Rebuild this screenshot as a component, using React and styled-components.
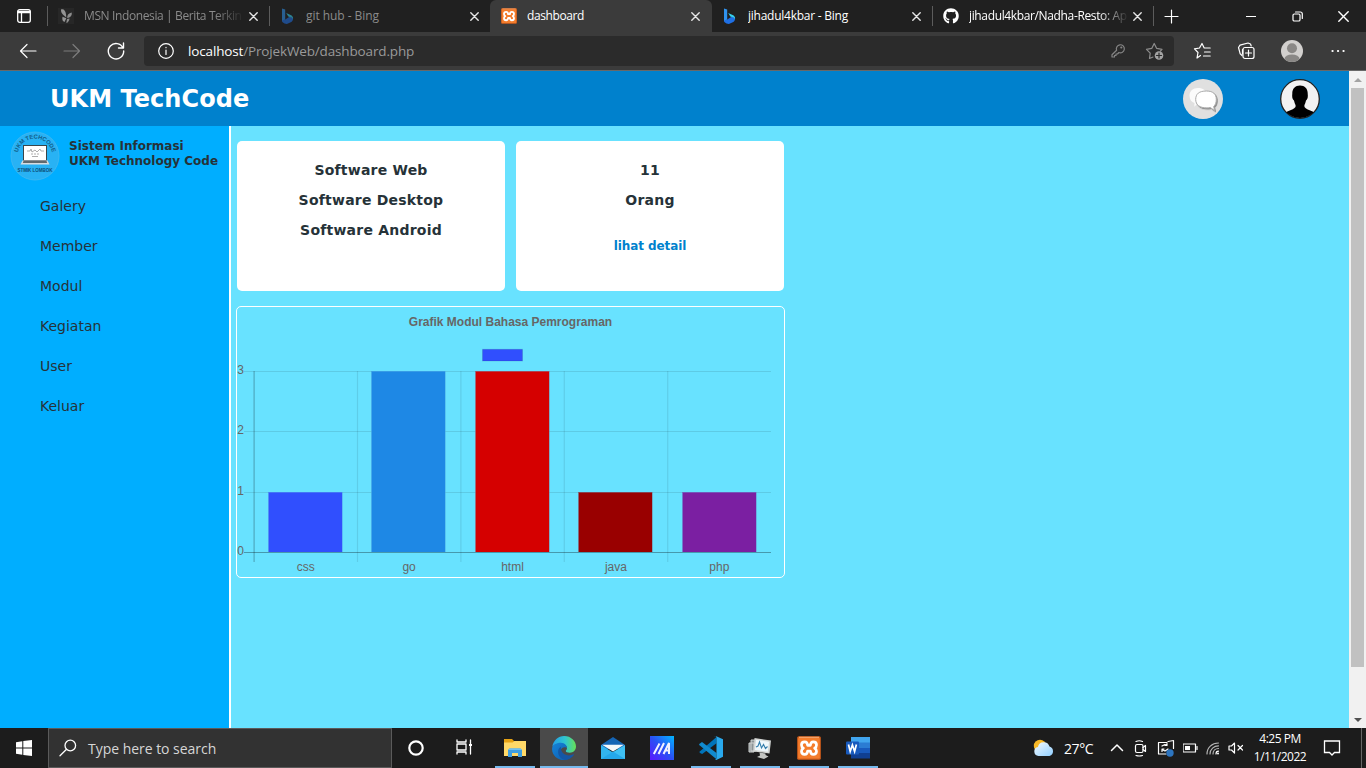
import React from "react";
import styled, { createGlobalStyle } from "styled-components";
import { FaGithub } from "react-icons/fa";

const GlobalStyle = createGlobalStyle`
  *, *::before, *::after { box-sizing: border-box; }
  html, body { margin: 0; padding: 0; overflow: hidden; background: #202020; }
  svg { display: block; flex: none; }
`;

const ui = `"Open Sans", "Noto Sans", sans-serif`;
const verdana = `"DejaVu Sans", Verdana, sans-serif`;

const Screen = styled.div`
  width: 1366px;
  height: 768px;
  display: flex;
  flex-direction: column;
  overflow: hidden;
  font-family: ${ui};
`;

/* ---------- browser chrome ---------- */
const TabStrip = styled.div`
  height: 32px;
  flex: none;
  display: flex;
  background: #202020;
  color: #fff;
`;
const TabActions = styled.div`
  width: 47px;
  padding-left: 17px;
  display: flex;
  align-items: center;
`;
const Separator = styled.div`
  width: 1px;
  height: 20px;
  margin-top: 6px;
  background: #5c5c5c;
`;
const Tab = styled.div`
  width: ${(p) => p.$width}px;
  padding: 0 ${(p) => p.$end ?? 11}px 0 ${(p) => p.$pad ?? 10}px;
  display: flex;
  align-items: center;
  background: ${(p) => (p.$active ? "#3b3b3b" : "transparent")};
  border-radius: 6px 6px 0 0;
`;
const Favicon = styled.div`
  width: 16px;
  height: 16px;
  flex: none;
  opacity: ${(p) => (p.$dim ? 0.55 : 1)};
`;
const TabTitle = styled.div`
  flex: 1;
  min-width: 0;
  margin-left: 10px;
  margin-right: 6px;
  overflow: hidden;
  white-space: nowrap;
  font-size: 12px;
  line-height: 16px;
  letter-spacing: ${(p) => p.$spacing ?? 0}px;
  color: ${(p) => (p.$dim ? "#8b8b8b" : "#fff")};
  ${(p) => p.$fade && "mask-image: linear-gradient(90deg, #000 82%, transparent 101%);"}
`;
const NewTab = styled.div`
  width: 34px;
  padding-left: 9px;
  display: flex;
  align-items: center;
`;
const WindowButtons = styled.div`
  margin-left: auto;
  width: 138px;
  display: flex;
  align-items: center;
`;
const WindowButton = styled.div`
  width: 46px;
  display: flex;
  justify-content: center;
`;
const Toolbar = styled.div`
  height: 39px;
  flex: none;
  display: flex;
  align-items: center;
  background: #3b3b3b;
  border-bottom: 1px solid #686868;
  padding-left: 18px;
  color: #fff;
`;
const NavIcons = styled.div`
  width: 126px;
  display: flex;
  gap: 24px;
`;
const AddressBar = styled.div`
  width: 1030px;
  height: 30px;
  border-radius: 4px;
  background: #2b2b2b;
  display: flex;
  align-items: center;
  padding: 0 9px 0 14px;
`;
const Url = styled.div`
  flex: 1;
  margin-left: 14px;
  font-size: 13.5px;
  line-height: 20px;
  letter-spacing: -0.15px;
  color: #9a9a9a;
  span { color: #fff; }
`;
const AddressIcons = styled.div`
  display: flex;
  gap: 18px;
`;
const ToolIcons = styled.div`
  margin-left: 19px;
  display: flex;
  align-items: center;
  gap: 24px;
`;

/* ---------- web page ---------- */
const Viewport = styled.div`
  height: 657px;
  flex: none;
  display: flex;
`;
const Page = styled.div`
  width: 1349px;
  display: flex;
  flex-direction: column;
  background: #68e2ff;
  font-family: ${verdana};
  color: #263238;
`;
const Header = styled.header`
  height: 55px;
  flex: none;
  display: flex;
  align-items: center;
  background: #0081cd;
  padding: 0 29px 0 50px;
`;
const Brand = styled.h1`
  margin: 0 auto 0 0;
  font-size: 24px;
  line-height: 28px;
  font-weight: 700;
  letter-spacing: 0.05px;
  color: #fff;
`;
const HeaderIcons = styled.div`
  display: flex;
  gap: 57px;
`;
const Body = styled.div`
  flex: 1;
  display: flex;
`;
const Sidebar = styled.aside`
  width: 231px;
  background: #00aeff;
  border-right: 2px solid #fff;
`;
const Identity = styled.div`
  display: flex;
  padding: 5px 0 0 10px;
`;
const IdentityText = styled.div`
  margin: 8px 0 0 9px;
  font-size: 12px;
  line-height: 15px;
  font-weight: 700;
  white-space: nowrap;
`;
const Menu = styled.nav`
  display: flex;
  flex-direction: column;
  padding: 5px 0 0 40px;
`;
const MenuItem = styled.a`
  height: 40px;
  font-size: 14px;
  line-height: 40px;
`;
const Content = styled.main`
  padding: 15px 0 0 5px;
`;
const CardRow = styled.div`
  display: flex;
  gap: 11px;
  padding-left: 1px;
`;
const Card = styled.section`
  width: 268px;
  height: 150px;
  padding-top: 14px;
  border-radius: 5px;
  background: #fff;
  text-align: center;
`;
const CardLine = styled.div`
  height: 30px;
  font-size: 14px;
  line-height: 30px;
  font-weight: 700;
  letter-spacing: 0.22px;
`;
const CardLink = styled.a`
  display: block;
  margin-top: 16px;
  font-size: 12px;
  line-height: 30px;
  font-weight: 700;
  letter-spacing: -0.1px;
  color: #0081cd;
`;
const ChartPanel = styled.section`
  width: 549px;
  height: 272px;
  margin-top: 15px;
  border: 1px solid #fff;
  border-radius: 5px;
`;
const Scrollbar = styled.div`
  width: 17px;
  background: #f1f1f1;
  display: flex;
  flex-direction: column;
  align-items: center;
`;
const ScrollArrow = styled.div`
  height: 17px;
  display: flex;
  align-items: center;
`;
const ScrollThumb = styled.div`
  width: 13px;
  height: 579px;
  margin-bottom: auto;
  background: #c1c1c1;
`;

/* ---------- taskbar ---------- */
const Taskbar = styled.div`
  height: 40px;
  flex: none;
  display: flex;
  background: #1c1c1c;
  color: #fff;
`;
const StartButton = styled.div`
  width: 48px;
  display: flex;
  align-items: center;
  justify-content: center;
`;
const SearchBox = styled.div`
  width: 344px;
  border: 1px solid #5a5a5a;
  background: #323232;
  display: flex;
  align-items: center;
  padding-left: 10px;
  gap: 11px;
  font-size: 14px;
  letter-spacing: -0.03px;
  color: #d6d6d6;
`;
const TaskButton = styled.div`
  width: ${(p) => p.$width ?? 48}px;
  height: 40px;
  margin-right: ${(p) => p.$after ?? 0}px;
  display: flex;
  align-items: center;
  justify-content: center;
  padding-top: ${(p) => p.$drop ?? 2}px;
  background: ${(p) => (p.$active ? "#4a4a4a" : "transparent")};
  border-bottom: 2px solid ${(p) => (p.$open ? "#76b9ed" : "transparent")};
`;
const Tray = styled.div`
  margin-left: auto;
  width: 333px;
  display: flex;
  align-items: center;
`;
const Temperature = styled.div`
  width: 46px;
  margin-left: 9px;
  font-size: 14px;
  letter-spacing: -0.4px;
  white-space: nowrap;
`;
const TrayIcons = styled.div`
  display: flex;
  align-items: center;
  gap: 8px;
`;
const Clock = styled.div`
  width: 66px;
  margin-left: 3px;
  text-align: center;
  font-size: 12px;
  line-height: 18px;
  letter-spacing: -0.5px;
  white-space: nowrap;
`;
const Notifications = styled.div`
  margin-left: 10px;
`;
const ShowDesktop = styled.div`
  width: 5px;
  height: 40px;
  margin-left: auto;
  border-left: 1px solid #666;
`;

const Line = ({ w = 16, h = w, vb, sw = 1.2, color = "#fff", children }) => (
  <svg width={w} height={h} viewBox={vb || `0 0 ${w} ${h}`} fill="none" stroke={color} strokeWidth={sw} strokeLinecap="round" strokeLinejoin="round">
    {children}
  </svg>
);

const CloseIcon = ({ size = 9, color = "#e6e6e6" }) => (
  <Line w={size} color={color} sw={1.4}>
    <path d={`M.8 .8 L${size - 0.8} ${size - 0.8} M${size - 0.8} .8 L.8 ${size - 0.8}`} />
  </Line>
);

const BingIcon = () => (
  <svg width="16" height="16" viewBox="0 0 16 16">
    <path d="M2 .5 5.200 1.600v9.800L2 13.600z" fill="#2f93ee" />
    <path d="M2 12.400 5.200 11.400 10 8.600l3 1.200c.3 2-.4 3.300-1.700 4.100L6.900 16 4.500 15.600 2.300 14z" fill="#1f6fe4" />
    <path d="M6.200 5 11.200 7.200c1.400.8 2.200 2.200 1.800 4.200-.3-1.200-1-1.700-2.200-2.100L8.300 8.600z" fill="#36d1ee" />
  </svg>
);

const MsnIcon = () => (
  <svg width="16" height="16" viewBox="0 0 16 16">
    <rect width="16" height="16" fill="#2e2e2e" />
    <path d="M3 1.500c2.600-1 4.600 1.100 5 4.900l.3 3.200L5.400 7C3.700 5.600 2.800 3.600 3 1.500zM4.500 8.700l3.800 1.500L6.500 14c-1.900-.6-2.600-2.500-2-5.300z" fill="#f3f3f3" />
    <path d="M13.700 4.500c.6 2.400-.8 4.600-3.100 5.300L9.200 10c-.2-3 1.600-5 4.500-5.500zM9 11l2.500-.6c-.1 2.200-1.300 3.900-3.200 4.600z" fill="#e5e5e5" />
  </svg>
);

const XamppIcon = ({ size }) => (
  <svg width={size} height={size} viewBox="0 0 24 24">
    <rect x=".2" y=".2" width="23.600" height="23.600" rx="1.600" fill="#d9601b" />
    <rect x="1.200" y="2" width="21.600" height="20.500" rx="1" fill="#f47d2c" />
    <path d="M2 1.300h20" stroke="#f9b27d" strokeWidth="1" />
    <path
      d="M6.400 12.200C5 11.500 4.500 10.300 4.500 9 4.500 7 6 5.900 7.700 5.900c2.200 0 2.800 1.300 2.900 3.400h2.800c.1-2.100.7-3.400 2.900-3.400 1.700 0 3.200 1.100 3.200 3.100 0 1.300-.5 2.500-1.900 3.200 1.400.7 1.900 1.800 1.900 3.100 0 2-1.500 3.100-3.200 3.100-2.200 0-2.800-1.300-2.900-3.400h-2.800c-.1 2.100-.7 3.400-2.900 3.400-1.700 0-3.200-1.100-3.200-3.100 0-1.300.5-2.400 1.900-3.100z"
      fill="none" stroke="#fff" strokeWidth="2.700" strokeLinejoin="round"
    />
  </svg>
);

const PersonIcon = () => (
  <svg width="22" height="22" viewBox="0 0 22 22">
    <clipPath id="person"><circle cx="11" cy="11" r="11" /></clipPath>
    <g clipPath="url(#person)">
      <rect width="22" height="22" fill="#d2d0ce" />
      <circle cx="11" cy="8.200" r="5" fill="#8a8886" />
      <ellipse cx="11" cy="19.400" rx="7.600" ry="5" fill="#8a8886" />
    </g>
  </svg>
);

const LogoIcon = () => (
  <svg width="50" height="50" viewBox="0 0 50 50">
    <circle cx="25" cy="25" r="24" fill="#28b2f4" stroke="#4bb9ed" strokeWidth=".7" />
    <path id="ring" d="M8.100 20.500A17.500 17.500 0 0 1 41.900 20.500" fill="none" />
    <text fontFamily="Liberation Sans, sans-serif" fontSize="5.800" fontWeight="700" fill="#11608c">
      <textPath href="#ring" startOffset="50%" textAnchor="middle">UKM TECHCODE</textPath>
    </text>
    <rect x="13" y="14" width="24" height="16" fill="#3a4549" />
    <rect x="14" y="15" width="22" height="14" fill="#fff" />
    <path d="M17 20h3l1-2 1 3 3-2 2 2 3-3 1 2h3M21 23h2m1 0h2m1 0h2M22 25.500h6" fill="none" stroke="#999" strokeWidth=".8" />
    <path d="M12.500 29.500h25l2 4h-29z" fill="#d7dcdf" />
    <path d="M13.500 30.300h23l.7 1.500H12.800z" fill="#384347" />
    <text x="25" y="40.500" textAnchor="middle" fontFamily="Liberation Sans, sans-serif" fontSize="4.500" fontWeight="700" fill="#0c4f78">STMIK LOMBOK</text>
  </svg>
);

const ChatIcon = () => (
  <svg width="40" height="40" viewBox="0 0 40 40">
    <defs><filter id="soft" x="-20%" y="-20%" width="150%" height="150%"><feDropShadow dx="1" dy="1.200" stdDeviation=".7" floodColor="#777" floodOpacity=".8" /></filter></defs>
    <circle cx="20" cy="20" r="20" fill="#e0e0e0" />
    <path d="M15 9c5 0 8.500 2.500 8.500 6.500S20 24.500 14.500 24.500l-3.200 3.200.2-3.600C8.500 23 6.500 20.500 6.500 16.500 6.500 12 10 9 15 9z" fill="#fbfbfb" />
    <path d="M23.500 12c6.500 0 9.800 3 9.800 8.500 0 3.300-1 5.500-2.600 7l.8 4-4.200-3c-1 .3-2 .4-3.300.4-7.500 0-11.300-3-11.300-8.500S16 12 23.500 12z" fill="#fff" stroke="#aaa" strokeWidth="1" filter="url(#soft)" />
  </svg>
);

const UserIcon = () => (
  <svg width="40" height="40" viewBox="0 0 40 40">
    <clipPath id="user"><circle cx="20" cy="20" r="19" /></clipPath>
    <circle cx="20" cy="20" r="19.300" fill="#f2f2f2" stroke="#222" strokeWidth="1.300" />
    <g clipPath="url(#user)">
      <path d="M20 6.500c5 0 8 3.500 7.700 8.500.5 3-.4 5.700-1.700 6.500-.5 2.500-1.500 4-1.700 5.500.2 4 8.700 4 11 7.500V40H4.700v-5.500c2.300-3.500 10.800-3.500 11-7.500-.2-1.500-1.200-3-1.700-5.500-1.300-.8-2.200-3.500-1.700-6.500-.3-5 2.700-8.500 7.700-8.500z" fill="#000" />
    </g>
  </svg>
);

const bars = [
  { label: "css", value: 1, color: "#304ffe" },
  { label: "go", value: 3, color: "#1e88e5" },
  { label: "html", value: 3, color: "#d50000" },
  { label: "java", value: 1, color: "#990000" },
  { label: "php", value: 1, color: "#7b1fa2" },
];
const levels = [245, 185, 124, 64];
const step = 103.4;

const ModuleChart = () => (
  <svg width="547" height="270" viewBox="0 0 547 270" fontFamily="Liberation Sans, Arial, sans-serif" fontSize="12" fill="#666">
    <text x="273.500" y="19" textAnchor="middle" fontWeight="700">Grafik Modul Bahasa Pemrograman</text>
    <rect x="245.500" y="42.300" width="40" height="11.700" fill="#304ffe" stroke="#000" strokeOpacity=".1" />
    {levels.map((y, i) => (
      <React.Fragment key={y}>
        <rect x="7" y={y} width="527" height="1" fill="#000" fillOpacity={i ? 0.1 : 0.32} />
        <text x="7" y={y + 3} textAnchor="end">{i}</text>
      </React.Fragment>
    ))}
    {bars.map((b, i) => (
      <React.Fragment key={b.label}>
        <rect x={i ? 16.500 + i * step : 16.500} y="64" width="1.200" height="191" fill="#000" fillOpacity={i ? 0.09 : 0.25} />
        <rect x={Math.round(31 + i * step) + 0.3} y={levels[b.value]} width="74" height={245 - levels[b.value]} fill={b.color} />
        <path d={`M${Math.round(31 + i * step) + 0.500} 245V${levels[b.value] + 0.500}h74V245`} fill="none" stroke="#68c2e8" strokeOpacity=".35" />
        <text x={68.700 + i * step} y="264" textAnchor="middle">{b.label}</text>
      </React.Fragment>
    ))}
  </svg>
);

const EdgeIcon = () => (
  <svg width="24" height="24" viewBox="0 0 24 24">
    <defs>
      <linearGradient id="edgeTop" x1="0" x2="1"><stop stopColor="#239ce8" /><stop offset=".55" stopColor="#30c6cf" /><stop offset="1" stopColor="#67df55" /></linearGradient>
      <linearGradient id="edgeSide" x1="0" y1="0" x2="1" y2="1"><stop stopColor="#1683d8" /><stop offset="1" stopColor="#0b5cae" /></linearGradient>
    </defs>
    <path d="M.3 10.800C1.200 4.700 6.200 0 12.200 0 19 0 24 5 24 10.600c0 3.600-2.600 6.200-6.200 6.200-2.500 0-4-.8-4-1.700 0-.6 1.200-1.100 1.200-3 0-2.300-2.300-4.600-6-4.600C4.900 7.500 1.800 8.700.3 10.800z" fill="url(#edgeTop)" />
    <path d="M.1 12.500C.4 9 4.300 6.600 8.900 6.700c4 .1 6.200 2.800 6 5.600-1-1.700-5.900-1.500-6.200 2.500-.3 4.300 4.600 8.500 10.500 6.500C17.200 23 14.800 24 12 24 5.300 24-.3 18.700.1 12.500z" fill="url(#edgeSide)" />
    <path d="M9.200 10.500c-1.800.9-3.100 3-3.100 5.200 0 4.100 3.100 7.600 7 8.200 3.900-.3 7.100-2.300 8.900-5.200.2-.4-.2-.6-.5-.4-3.100 1.600-6.600 1.300-8.900 0-2.800-1.700-4.300-4.900-3.400-7.800z" fill="#1557a5" />
  </svg>
);

const FolderIcon = () => (
  <svg width="22" height="20" viewBox="0 0 22 20">
    <path d="M0 1h8l2 2h12v15H0z" fill="#e6a214" />
    <path d="M0 4.500h8.500L10.500 3H22v15H0z" fill="#ffd968" />
    <path d="M4 19v-7l1.500-1.500h11L18 12v7h-4v-4H8v4z" fill="#3e9ee0" />
    <path d="M5.500 10.500h11L18 12H4z" fill="#73c2f1" />
  </svg>
);

const MailIcon = () => (
  <svg width="24" height="24" viewBox="0 0 24 24">
    <path d="M0 9 12 1l12 8v4H0z" fill="#1565b5" />
    <path d="M0 9l12 7.500V23H0z" fill="#32b5ef" />
    <path d="M24 9v14H0z" fill="#3fc0f3" />
    <path d="M1 8.700h22L12 15.500z" fill="#f5f8fa" />
    <path d="M0 23l12-7.500L24 23z" fill="#25a7ea" />
  </svg>
);

const ArmouryIcon = () => (
  <svg width="24" height="24" viewBox="0 0 24 24">
    <linearGradient id="asus" x1="0" y1="1" x2="1" y2="0"><stop stopColor="#5c16ff" /><stop offset=".5" stopColor="#2a50f5" /><stop offset="1" stopColor="#02b7ff" /></linearGradient>
    <rect width="24" height="24" fill="url(#asus)" />
    <path d="M3.800 18 9.500 7.500M8.500 18 14 7M13.500 18l5.500-11v11M16 14.500h3" fill="none" stroke="#f1f2ff" strokeWidth="2" />
  </svg>
);

const CodeIcon = () => (
  <svg width="24" height="24" viewBox="0 0 24 24">
    <path d="M17.500 1v6.200L3.200 18.100 1.500 17.300.2 15.900z" fill="#0074ba" />
    <path d="M.2 8 3 6l14.500 11v6.200L.2 8.900z" fill="#118ace" />
    <path d="M17.300.2 24 3.200v17.600L17.300 24c-.9-.2-1.400-.5-1.800-.9.9.5 2 .1 2-1V1.900c0-1.200-1.100-1.600-2-1z" fill="#29a9ed" />
  </svg>
);

const MonitorIcon = () => (
  <svg width="24" height="24" viewBox="0 0 24 24">
    <path d="M1 7h5v9H1zM3 4h5v11H3z" fill="#8d9496" stroke="#d0d3d2" />
    <path d="m6.500 2 16.500 2.500-1.500 13L5.500 15.500z" fill="#d4d7d5" />
    <path d="m8 3.800 13 2-1.200 9.900L7 13.900z" fill="#eff8fc" />
    <path d="m8 11 2-1L11.500 6l2 6 2-3.500 2 4 2-2" fill="none" stroke="#347eac" strokeWidth="1.100" />
    <path d="m11.500 16.500 6 1v1.500l3 1.500-4.500 2.500-7-2 3-1.500z" fill="#c4c6c3" />
  </svg>
);

const WordIcon = () => (
  <svg width="24" height="22" viewBox="0 0 24 22">
    <path d="M5 0h19v6H5z" fill="#41a5ee" />
    <path d="M5 5.500h19V11H5z" fill="#2b7cd3" />
    <path d="M5 11h19v5.500H5z" fill="#185abd" />
    <path d="M5 16h19v5.500H5z" fill="#103f91" />
    <rect y="4.500" width="13" height="13" rx="1" fill="#185abd" />
    <path d="m2.500 7.500 1.700 7 2.200-6.500 2.200 6.500 1.800-7" fill="none" stroke="#fff" strokeWidth="1.700" />
  </svg>
);

const WeatherIcon = () => (
  <svg width="22" height="18" viewBox="0 0 22 18">
    <defs><linearGradient id="cloud" x1="0" y1="0" x2="1" y2="1"><stop stopColor="#f4faff" /><stop offset="1" stopColor="#91cfff" /></linearGradient></defs>
    <circle cx="7" cy="7" r="6.200" fill="#f8b928" />
    <path d="M5.500 17a4.500 4.500 0 0 1-.6-8.900 6 6 0 0 1 11.600-.5A4.900 4.900 0 0 1 16.500 17z" fill="url(#cloud)" />
  </svg>
);

export default function App() {
  return (
    <Screen>
      <GlobalStyle />
      <TabStrip>
        <TabActions>
          <Line w={14} sw={1.3}>
            <rect x=".7" y=".7" width="12.600" height="12.600" rx="2" />
            <path d="M1 2.500h12M1 3.500h12M4.500 4v9" />
          </Line>
        </TabActions>
        <Separator />
        <Tab $width={221}>
          <Favicon $dim><MsnIcon /></Favicon>
          <TabTitle $dim $fade $spacing={-0.38}>MSN Indonesia | Berita Terkin</TabTitle>
          <CloseIcon />
        </Tab>
        <Separator />
        <Tab $width={220}>
          <Favicon $dim><BingIcon /></Favicon>
          <TabTitle $dim $spacing={-0.05}>git hub - Bing</TabTitle>
          <CloseIcon />
        </Tab>
        <Tab $width={222} $active $pad={11} $end={12}>
          <Favicon><XamppIcon size={16} /></Favicon>
          <TabTitle $spacing={-0.4}>dashboard</TabTitle>
          <CloseIcon />
        </Tab>
        <Tab $width={220}>
          <Favicon><BingIcon /></Favicon>
          <TabTitle $spacing={-0.25}>jihadul4kbar - Bing</TabTitle>
          <CloseIcon />
        </Tab>
        <Separator />
        <Tab $width={220}>
          <Favicon><FaGithub size={16} /></Favicon>
          <TabTitle $fade $spacing={-0.36}>jihadul4kbar/Nadha-Resto: Ap</TabTitle>
          <CloseIcon />
        </Tab>
        <Separator />
        <NewTab><Line w={17}><path d="M8.500 2v13M2 8.500h13" /></Line></NewTab>
        <WindowButtons>
          <WindowButton><Line w={10}><path d="M0 5.500h10" /></Line></WindowButton>
          <WindowButton>
            <Line w={11}><rect x="1" y="3" width="7" height="7" rx="1.300" /><path d="M3.500 1h4.800a2 2 0 0 1 2 2v4.500" /></Line>
          </WindowButton>
          <WindowButton><CloseIcon size={11} color="#fff" /></WindowButton>
        </WindowButtons>
      </TabStrip>

      <Toolbar>
        <NavIcons>
          <Line w={20}><path d="M18 10H2.500M9 3.500 2.500 10 9 16.500" /></Line>
          <Line w={20} color="#7c7c7c"><path d="M2 10h15.500M11 3.500l6.500 6.500-6.500 6.500" /></Line>
          <Line w={20} sw={1.4}><path d="M17 7A7.700 7.700 0 1 0 17.700 10M17.500 2v5h-5" /></Line>
        </NavIcons>
        <AddressBar>
          <Line w={16}><circle cx="8" cy="8" r="7.300" /><path d="M8 7v4.500M8 4.400v.3" /></Line>
          <Url><span>localhost</span>/ProjekWeb/dashboard.php</Url>
          <AddressIcons>
            <Line w={18} color="#858585">
              <path d="M7.600 9.200a4 4 0 1 1 2.300 2.300L8.500 13H7v1.500H5.500V16H3v-2.300z" /><circle cx="12.300" cy="6.500" r=".5" />
            </Line>
            <Line w={20} color="#8d8d8d">
              <path d="M8 16 4.500 17.500l.7-5.300L1.500 8.300l5.200-.9L9.200 2.500l2.500 4.900 5.300.9-1.500 1.700" />
              <circle cx="14" cy="14.500" r="4.300" fill="#a4a4a4" stroke="none" /><path d="M14 12v5M11.500 14.500h5" stroke="#2b2b2b" />
            </Line>
          </AddressIcons>
        </AddressBar>
        <ToolIcons>
          <Line w={20}><path d="M7.500 14.500 4 17l1-5.500-3.500-3.700 5-.8L9 2.500 11.200 7h6M11.500 11h5.700M10.500 15h6.700" /></Line>
          <Line w={20}>
            <path d="M5 14.500 3.200 12.800 1.500 6.500 3 4.200 11 2l2.500 1 .7 2M5.500 13V8.500" /><rect x="6" y="6.500" width="11" height="11" rx="2" /><path d="M11.500 9v6M8.500 12h6" />
          </Line>
          <PersonIcon />
          <Line w={20} sw={2.2}><path d="M5.500 10h.1M11 10h.1M16.500 10h.1" /></Line>
        </ToolIcons>
      </Toolbar>

      <Viewport>
        <Page>
          <Header>
            <Brand>UKM TechCode</Brand>
            <HeaderIcons><ChatIcon /><UserIcon /></HeaderIcons>
          </Header>
          <Body>
            <Sidebar>
              <Identity>
                <LogoIcon />
                <IdentityText>Sistem Informasi<br />UKM Technology Code</IdentityText>
              </Identity>
              <Menu>
                {["Galery", "Member", "Modul", "Kegiatan", "User", "Keluar"].map((m) => <MenuItem key={m}>{m}</MenuItem>)}
              </Menu>
            </Sidebar>
            <Content>
              <CardRow>
                <Card>
                  <CardLine>Software Web</CardLine>
                  <CardLine>Software Desktop</CardLine>
                  <CardLine>Software Android</CardLine>
                </Card>
                <Card>
                  <CardLine>11</CardLine>
                  <CardLine>Orang</CardLine>
                  <CardLink>lihat detail</CardLink>
                </Card>
              </CardRow>
              <ChartPanel><ModuleChart /></ChartPanel>
            </Content>
          </Body>
        </Page>
        <Scrollbar>
          <ScrollArrow><svg width="8" height="4" viewBox="0 0 8 4"><path d="M0 4 4 0l4 4z" fill="#a3a3a3" /></svg></ScrollArrow>
          <ScrollThumb />
          <ScrollArrow><svg width="8" height="4" viewBox="0 0 8 4"><path d="M0 0h8L4 4z" fill="#505050" /></svg></ScrollArrow>
        </Scrollbar>
      </Viewport>

      <Taskbar>
        <StartButton>
          <svg width="16" height="16" viewBox="0 0 16 16" fill="#fff"><path d="M0 2.200 6.300 1.300v6.200H0zM7.300 1.100 16 0v7.500H7.300zM0 8.500h6.300v6.200L0 13.800zM7.300 8.500H16V16l-8.700-1.100z" /></svg>
        </StartButton>
        <SearchBox>
          <Line w={18} sw={1.3}><circle cx="11.300" cy="6.500" r="5.300" /><path d="M7.300 10.500 1 16.800" /></Line>
          Type here to search
        </SearchBox>
        <TaskButton><Line w={16} sw={2.2}><circle cx="8" cy="8" r="6.700" /></Line></TaskButton>
        <TaskButton $drop={0} $after={7}>
          <Line w={16} sw={1.3}><path d="M1 1v2h9V1M1 15v-2h9v2M14.500 1v14" /><rect x="1" y="5" width="9" height="6" /><path d="M14.500 5v2" strokeWidth="3" strokeLinecap="butt" /></Line>
        </TaskButton>
        <TaskButton $width={40} $after={5} $open><FolderIcon /></TaskButton>
        <TaskButton $active $open $after={5}><EdgeIcon /></TaskButton>
        <TaskButton $width={40} $after={9}><MailIcon /></TaskButton>
        <TaskButton $width={40} $after={9}><ArmouryIcon /></TaskButton>
        <TaskButton $width={40} $after={9} $open><CodeIcon /></TaskButton>
        <TaskButton $width={40} $after={9} $open><MonitorIcon /></TaskButton>
        <TaskButton $width={40} $after={9} $open><XamppIcon size={24} /></TaskButton>
        <TaskButton $width={40} $open><WordIcon /></TaskButton>
        <Tray>
          <WeatherIcon />
          <Temperature>27°C</Temperature>
          <TrayIcons>
            <Line w={14} sw={1.5}><path d="m1.500 9.500 5.500-5.500 5.500 5.500" /></Line>
            <Line w={17}><rect x="3.500" y="4.500" width="7.500" height="8" rx="1.500" /><path d="m11 7.500 2.500-2v6l-2.500-2M4 1.500q3.300-1.500 6.500 0M4 15.500q3.300 1 6.500 0" /></Line>
            <Line w={18}><path d="M10 3.500H1.500v11.500H9M11 2.500l5.500-1v8M5 7l3-1.500 2 1M5 10.500l3 1.500 3-2M10 4.500v2H8M5 12.500V10h2" /><circle cx="13" cy="14" r="3.700" fill="#2d75c0" stroke="none" /></Line>
            <Line w={15} h={16}><rect x="0" y="4" width="12.500" height="8" /><rect x="2" y="6" width="5" height="4" fill="#fff" stroke="none" /><path d="M14 6.500v3" /></Line>
            <Line w={14} color="#b5b5b5"><path d="M1 13C1 6.500 6 2 12.500 2M4 13C4 8.200 8 4.800 12.500 4.800M7 13C7 9.500 9.500 7.500 12.500 7.500" /><path d="M10 13c0-2 1-2.800 2.500-2.800" stroke="#fff" /><circle cx="12" cy="12.500" r="1" fill="#fff" stroke="none" /></Line>
            <Line w={16}><path d="M1 6v4h2.500L6.500 13V3L3.500 6zM10 5.500l4.500 4.500M14.500 5.500 10 10" /></Line>
          </TrayIcons>
          <Clock>4:25 PM<br />1/11/2022</Clock>
          <Notifications><Line w={18} sw={1.3}><path d="M1.500 2h15v11.500H11.500L9 16l-2.500-2.500h-5z" strokeLinejoin="miter" /></Line></Notifications>
          <ShowDesktop />
        </Tray>
      </Taskbar>
    </Screen>
  );
}
